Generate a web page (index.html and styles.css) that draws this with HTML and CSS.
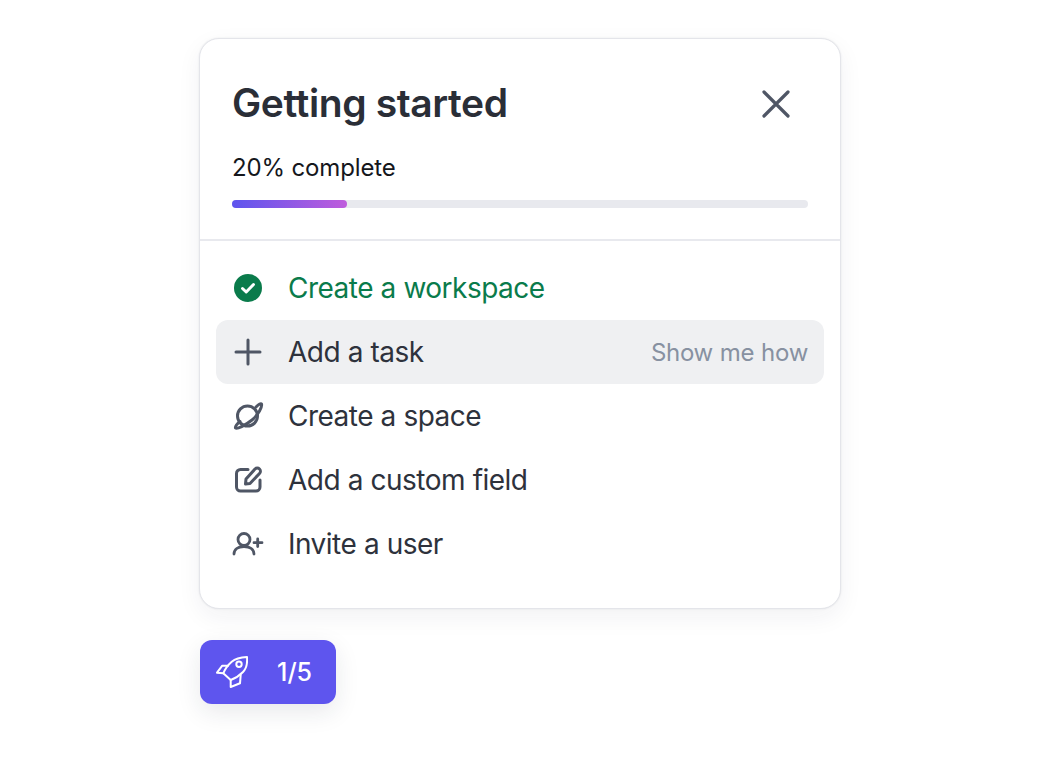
FILE: index.html
```html
<!DOCTYPE html>
<html lang="en">
<head>
    <meta charset="UTF-8">
    <meta name="viewport" content="width=device-width, initial-scale=1.0">
    <title>Getting started</title>
    <link rel="stylesheet" href="styles.css">
</head>
<body>

    <div class="wrap">
        <div class="card">
            <div class="card-head">
                <div class="title-row">
                    <h2>Getting started</h2>
                    <button class="close" aria-label="Close">
                        <svg width="32" height="32" viewBox="0 0 32 32" fill="none" stroke="#4f5665" stroke-width="3.200" stroke-linecap="round"><path d="M4 4 L28 28 M28 4 L4 28"/></svg>
                    </button>
                </div>
                <div class="percent">20% complete</div>
                <div class="track"><div class="fill" style="width: 20%"></div></div>
            </div>

            <ul class="steps">
                <li class="step done">
                    <svg class="icon" viewBox="0 0 32 32"><circle cx="16" cy="16" r="14" fill="#0a7b4b"/><path d="M10.5 16.5 L14.2 20 L21.5 12.5" fill="none" stroke="#fff" stroke-width="3" stroke-linecap="round" stroke-linejoin="round"/></svg>
                    <span>Create a workspace</span>
                </li>
                <li class="step active">
                    <svg class="icon" viewBox="0 0 32 32" fill="none" stroke="#4f5665" stroke-width="3" stroke-linecap="round"><path d="M16 4 V28 M4 16 H28"/></svg>
                    <span>Add a task</span>
                    <span class="hint">Show me how</span>
                </li>
                <li class="step">
                    <svg class="icon" viewBox="0 0 32 32" fill="none" stroke="#4f5665" stroke-width="3" stroke-linecap="round" stroke-linejoin="round"><circle cx="15.500" cy="16" r="10"/><path d="M24 7 C27 4 29 3 29.500 4 C30.500 7 26 15 20 20 C13 25.500 5 29.500 3.500 28 C3 26.500 5 24 8 21.500"/></svg>
                    <span>Create a space</span>
                </li>
                <li class="step">
                    <svg class="icon" viewBox="0 0 32 32" fill="none" stroke="#4f5665" stroke-width="3" stroke-linecap="round" stroke-linejoin="round"><path d="M16 5.500 H8.500 A4 4 0 0 0 4.500 9.500 V23 A4 4 0 0 0 8.500 27 H24 A4 4 0 0 0 28 23 V16"/><path d="M23 5 A3 3 0 0 1 27.500 9.500 L18 19.500 L13.500 20 L14 15 Z"/></svg>
                    <span>Add a custom field</span>
                </li>
                <li class="step">
                    <svg class="icon" viewBox="0 0 32 32" fill="none" stroke="#4f5665" stroke-width="2.800" stroke-linecap="round" stroke-linejoin="round"><circle cx="12" cy="11.500" r="6"/><path d="M2 26 C2 21.500 6 18.500 12 18.500 C18 18.500 22 21.500 22 26"/><path d="M25.700 11 V18.500 M22 14.700 H30"/></svg>
                    <span>Invite a user</span>
                </li>
            </ul>
        </div>

        <button class="launcher">
            <svg class="rocket" viewBox="0 0 32 32" fill="none" stroke="#fff" stroke-width="2" stroke-linecap="round" stroke-linejoin="round"><path d="M31 1 C24 1.500 19 3 15.700 5.700 C12 9 9 13 7.300 17.300 L14.700 24 C19 22.500 24 19 27 16 C30 13 31.500 7 31 1 Z"/><circle cx="23" cy="8.300" r="2.700"/><path d="M12 9.700 H6.300 L1 16.700 L7.300 17.300"/><path d="M14.700 24 V31 L24 27.300 L24.700 19"/></svg>
            <span>1/5</span>
        </button>
    </div>

</body>
</html>
```

FILE: styles.css
```css
body {
    margin: 0;
    background: #fff;
    font-family: Inter, "Liberation Sans", sans-serif;
    color: #2e323c;
}
.wrap {
    width: 642px;
    margin: 0 auto;
    padding: 38px 0 60px;
}
.card {
    background: #fff;
    border: 1px solid #e4e5ea;
    border-radius: 20px;
    box-shadow: 0 0 2px rgba(30, 35, 60, 0.1), 0 8px 24px rgba(30, 35, 60, 0.06);
}
.card-head {
    padding: 40px 32px 31px;
    border-bottom: 2px solid #e8e9ee;
}
.title-row {
    display: flex;
    justify-content: space-between;
    align-items: center;
}
h2 {
    margin: 0;
    font-size: 39px;
    line-height: 48px;
    font-weight: 600;
    letter-spacing: -0.4px;
    color: #2a2e37;
}
.close {
    display: flex;
    padding: 0;
    margin: 2px 16px 0 0;
    background: none;
    border: none;
    cursor: pointer;
}
.percent {
    margin-top: 27px;
    font-size: 24px;
    line-height: 28px;
    letter-spacing: -0.14px;
    color: #15171c;
}
.track {
    height: 8px;
    margin-top: 18px;
    background: #e8e9ee;
    border-radius: 4px;
}
.fill {
    height: 100%;
    border-radius: 4px;
    background: linear-gradient(90deg, #5e55ee, #bf5cdc);
}
.steps {
    list-style: none;
    margin: 0;
    padding: 15px 16px 32px;
}
.step {
    display: flex;
    align-items: center;
    gap: 24px;
    height: 64px;
    padding: 0 16px;
    border-radius: 12px;
    font-size: 28px;
    letter-spacing: -0.52px;
    word-spacing: 0.3px;
    color: #2e323c;
}
.icon {
    width: 32px;
    height: 32px;
    flex: none;
}
.done {
    color: #0a7b4b;
}
.active {
    background: #eff0f2;
}
.hint {
    margin-left: auto;
    font-size: 24px;
    letter-spacing: -0.27px;
    color: #8791a1;
}
.launcher {
    display: flex;
    align-items: center;
    gap: 29px;
    width: 136px;
    height: 64px;
    margin: 31px 0 0 1px;
    padding: 0 16px;
    background: #5e55ee;
    border: none;
    border-radius: 12px;
    box-shadow: 0 8px 24px rgba(30, 35, 60, 0.1);
    color: #fff;
    font-family: inherit;
    font-size: 25px;
    font-weight: 500;
    cursor: pointer;
}
.rocket {
    width: 32px;
    height: 32px;
    flex: none;
}
```
